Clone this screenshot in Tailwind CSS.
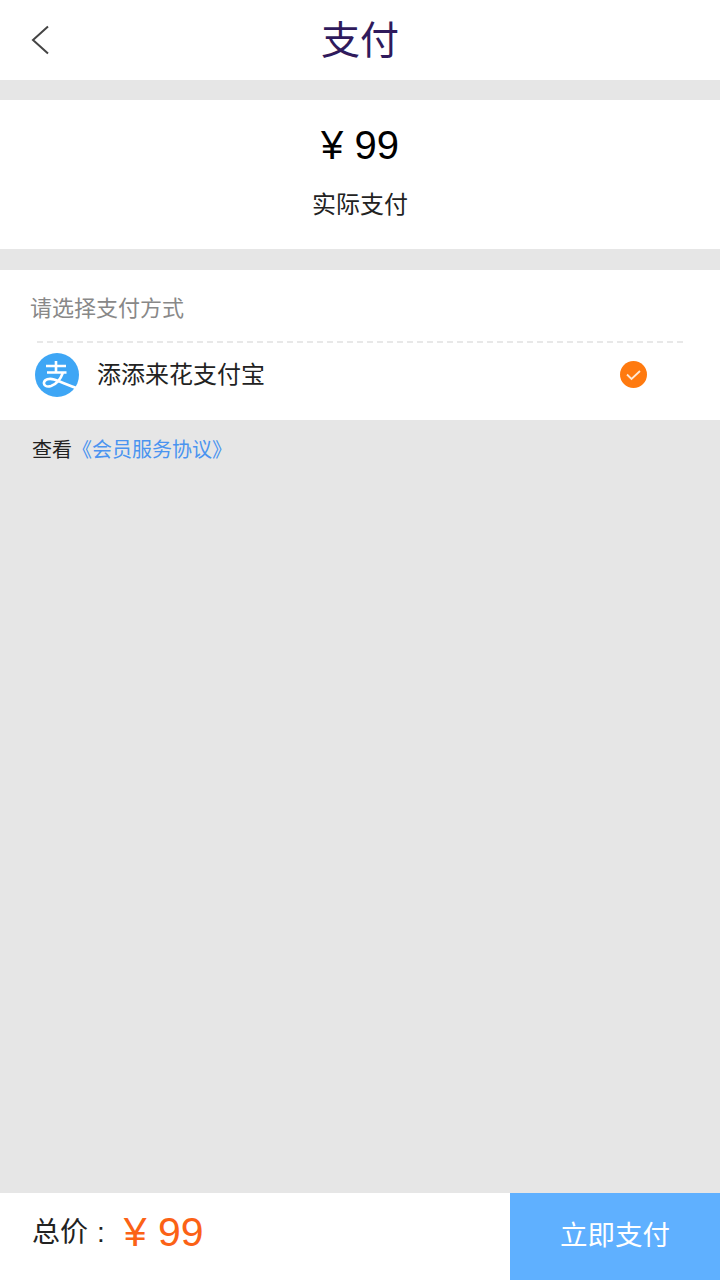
<!DOCTYPE html>
<html lang="zh-CN">
<head>
  <meta charset="UTF-8" />
  <title>支付</title>
  <script src="https://cdn.jsdelivr.net/npm/@tailwindcss/browser@4"></script>
</head>
<body class="bg-[#e6e6e6] font-['Liberation_Sans','Noto_Sans_CJK_SC',sans-serif]">
  <div class="flex flex-col w-[720px] h-[1280px] overflow-hidden">
    <!-- header -->
    <header class="relative flex items-center justify-center h-20 bg-white">
      <a href="#" class="absolute left-[31px] top-[25px] text-[#333]">
        <svg width="18" height="30" viewBox="0 0 18 30" fill="none" stroke="#444" stroke-width="2"><path d="M17 1.5 2 15l15 13.5" /></svg>
      </a>
      <h1 class="text-[39px] font-normal leading-none text-[#2f1a5c]">支付</h1>
    </header>

    <!-- amount -->
    <section class="flex flex-col items-center h-[149px] mt-5 bg-white pt-[23px]">
      <div class="text-[40px] leading-[44px] text-black">¥ 99</div>
      <div class="mt-[22px] text-[24px] leading-[32px] text-[#222]">实际支付</div>
    </section>

    <!-- pay method -->
    <section class="h-[150px] mt-[21px] bg-white">
      <div class="pl-[30px] pt-[23px] text-[22px] leading-[32px] text-[#888]">请选择支付方式</div>
      <div class="mx-[37px] mt-[16px] border-t-2 border-dashed border-[#e8e8e8]"></div>
      <div class="flex items-center pl-[35px] pr-[73px] h-[64px]">
        <svg width="44" height="44" viewBox="0 0 44 44">
          <circle cx="22" cy="22" r="22" fill="#3ea6f5" />
          <path d="M11 13h20M21 8v11M12 19.500h19.500M28 19.500c-2.500 7-7.500 12-12 13.500-5 1.500-7.500-1-7-3.500.6-3 5-4.500 10-3 6 1.800 12 5 25 9.500" fill="none" stroke="#fff" stroke-width="2.600" />
        </svg>
        <span class="ml-[18px] text-[24px] text-[#222]">添添来花支付宝</span>
        <svg class="ml-auto mb-px" width="27" height="27" viewBox="0 0 27 27">
          <circle cx="13.500" cy="13.500" r="13.500" fill="#ff7a0f" />
          <path d="M7 13.500l4.500 4.500 8.500-8" fill="none" stroke="#ffe9d6" stroke-width="1.800" />
        </svg>
      </div>
    </section>

    <!-- agreement -->
    <p class="pl-[32px] pt-[15px] text-[20px] leading-[30px] text-[#222]">查看<a href="#" class="text-[#4a94f0]">《会员服务协议》</a></p>

    <!-- footer -->
    <footer class="flex items-stretch h-[87px] mt-auto bg-white">
      <div class="flex flex-1 items-center pl-[32px] pb-[8px]">
        <span class="text-[28px] text-[#222]">总价</span>
        <span class="ml-[9px] text-[28px] text-[#222]">:</span>
        <span class="ml-[19px] text-[41px] text-[#fb6216]">¥ 99</span>
      </div>
      <button class="w-[210px] pb-px bg-[#5fb0ff] text-[27.500px] text-white">立即支付</button>
    </footer>
  </div>
</body>
</html>
